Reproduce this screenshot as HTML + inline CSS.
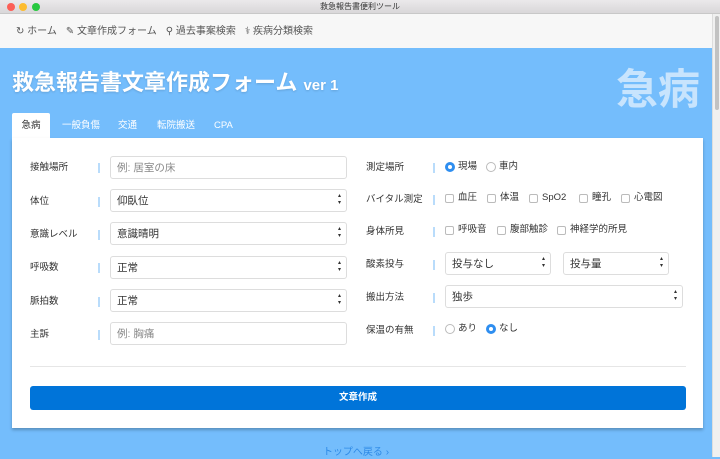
<!DOCTYPE html>
<html><head><meta charset="utf-8"><style>
*{box-sizing:border-box;margin:0;padding:0}
body{width:720px;height:457px;overflow:hidden;background:#74bdfc;font-family:"Liberation Sans","Noto Sans CJK JP",sans-serif;position:relative}
.tb{position:absolute;left:0;top:0;width:720px;height:14px;background:linear-gradient(#ebe9eb,#d9d7d9);border-bottom:1px solid #c8c8c8;font-size:8px;text-align:center;line-height:14px;color:#333}
.dot{position:absolute;top:3px;width:8px;height:8px;border-radius:50%}
.nav{position:absolute;left:0;top:14px;width:712px;height:34px;background:#f7f7f7;font-size:10px;color:#555;line-height:12px;padding:12px 0 0 16px}
.nav span{margin-right:9px}
.sb{position:absolute;right:0;top:14px;width:8px;height:443px;background:#f0f0f0;border-left:1px solid #ddd}
.sb div{position:absolute;left:2px;top:2px;width:4px;height:94px;background:#c2c2c2;border-radius:2px}
h1{position:absolute;left:12px;top:70px;color:#fff;font-size:22px;line-height:26px;font-weight:bold;text-shadow:0 1px 2px rgba(0,0,0,.15)}
h1 small{font-size:15px}
.big{position:absolute;left:616px;top:66px;color:#c8e4fd;font-size:42px;line-height:48px;font-weight:bold}
.tabs{position:absolute;left:12px;top:113px;height:25px;font-size:9.5px;color:#fff}
.tabs span{position:absolute;top:0;height:25px;line-height:26px;white-space:nowrap}
.tabs .a{background:#fff;color:#333;left:0;width:38px;text-align:center;border-radius:2px 2px 0 0}
.card{position:absolute;left:12px;top:138px;width:691px;height:290px;background:#fff;box-shadow:0 2px 3px rgba(0,0,0,.25)}
.l{position:absolute;font-size:9.5px;line-height:12px;color:#333}
.bar{position:absolute;width:2px;height:10px;background:#b9dcfb}
.in{position:absolute;height:23px;border:1px solid #ddd;border-radius:3px;font-size:10.5px;line-height:12px;padding:5px 0 0 6px;color:#333}
.ph{color:#888}
.in.s::after{content:"\25B4\A\25BE";white-space:pre;position:absolute;right:5px;top:3px;font-size:6px;line-height:7px;color:#333}
.opt{position:absolute;font-size:9.5px;line-height:12px;color:#333;white-space:nowrap;display:flex;align-items:center}
.cb{display:inline-block;width:9px;height:9px;border:1px solid #bbb;border-radius:2px;margin-right:4px}
.rd{display:inline-block;width:10px;height:10px;border:1px solid #bbb;border-radius:50%;margin-right:3px}
.rd.on{border:3px solid #2e8ef0;background:#fff}
.hr{position:absolute;left:18px;top:228px;width:656px;height:1px;background:#e6e6e6}
.btn{position:absolute;left:18px;top:248px;width:656px;height:24px;background:#0074d9;border-radius:3px;color:#fff;font-size:9.5px;font-weight:bold;text-align:center;line-height:12px;padding-top:6px}
.top{position:absolute;left:0;width:712px;top:447px;text-align:center;font-size:10px;line-height:12px;color:#2e8ae6}
</style></head><body>
<div class="tb">救急報告書便利ツール</div>
<div class="dot" style="left:7px;background:#fc5f57"></div>
<div class="dot" style="left:19px;background:#fdbc2e"></div>
<div class="dot" style="left:32px;background:#28c840"></div>
<div class="nav"><span>↻ ホーム</span><span>✎ 文章作成フォーム</span><span>⚲ 過去事案検索</span><span>⚕ 疾病分類検索</span></div>
<div class="sb"><div></div></div>
<h1>救急報告書文章作成フォーム <small>ver 1</small></h1>
<div class="big">急病</div>
<div class="tabs"><span class="a">急病</span><span style="left:50px">一般負傷</span><span style="left:106px">交通</span><span style="left:145px">転院搬送</span><span style="left:202px">CPA</span></div>
<div class="card">
<div class="l" style="left:18px;top:24px">接触場所</div><div class="bar" style="left:86px;top:25px"></div><div class="in ph" style="left:98px;top:18px;width:237px">例: 居室の床</div>
<div class="l" style="left:18px;top:58px">体位</div><div class="bar" style="left:86px;top:59px"></div><div class="in s" style="left:98px;top:51px;width:237px">仰臥位</div>
<div class="l" style="left:18px;top:91px">意識レベル</div><div class="bar" style="left:86px;top:92px"></div><div class="in s" style="left:98px;top:84px;width:237px">意識晴明</div>
<div class="l" style="left:18px;top:124px">呼吸数</div><div class="bar" style="left:86px;top:125px"></div><div class="in s" style="left:98px;top:118px;width:237px">正常</div>
<div class="l" style="left:18px;top:158px">脈拍数</div><div class="bar" style="left:86px;top:159px"></div><div class="in s" style="left:98px;top:151px;width:237px">正常</div>
<div class="l" style="left:18px;top:191px">主訴</div><div class="bar" style="left:86px;top:192px"></div><div class="in ph" style="left:98px;top:184px;width:237px">例: 胸痛</div>

<div class="l" style="left:354px;top:24px">測定場所</div><div class="bar" style="left:421px;top:25px"></div>
<div class="opt" style="left:433px;top:23px"><span class="rd on"></span>現場</div><div class="opt" style="left:474px;top:23px"><span class="rd"></span>車内</div>
<div class="l" style="left:354px;top:56px">バイタル測定</div><div class="bar" style="left:421px;top:57px"></div>
<div class="opt" style="left:433px;top:54px"><span class="cb"></span>血圧</div><div class="opt" style="left:475px;top:54px"><span class="cb"></span>体温</div><div class="opt" style="left:517px;top:54px"><span class="cb"></span>SpO2</div><div class="opt" style="left:567px;top:54px"><span class="cb"></span>瞳孔</div><div class="opt" style="left:609px;top:54px"><span class="cb"></span>心電図</div>
<div class="l" style="left:354px;top:88px">身体所見</div><div class="bar" style="left:421px;top:89px"></div>
<div class="opt" style="left:433px;top:86px"><span class="cb"></span>呼吸音</div><div class="opt" style="left:485px;top:86px"><span class="cb"></span>腹部触診</div><div class="opt" style="left:545px;top:86px"><span class="cb"></span>神経学的所見</div>
<div class="l" style="left:354px;top:121px">酸素投与</div><div class="bar" style="left:421px;top:122px"></div>
<div class="in s" style="left:433px;top:114px;width:106px">投与なし</div><div class="in s" style="left:551px;top:114px;width:106px">投与量</div>
<div class="l" style="left:354px;top:154px">搬出方法</div><div class="bar" style="left:421px;top:155px"></div>
<div class="in s" style="left:433px;top:147px;width:238px">独歩</div>
<div class="l" style="left:354px;top:187px">保温の有無</div><div class="bar" style="left:421px;top:188px"></div>
<div class="opt" style="left:433px;top:185px"><span class="rd"></span>あり</div><div class="opt" style="left:474px;top:185px"><span class="rd on"></span>なし</div>
<div class="hr"></div>
<div class="btn">文章作成</div>
</div>
<div class="top">トップへ戻る ›</div>
</body></html>
